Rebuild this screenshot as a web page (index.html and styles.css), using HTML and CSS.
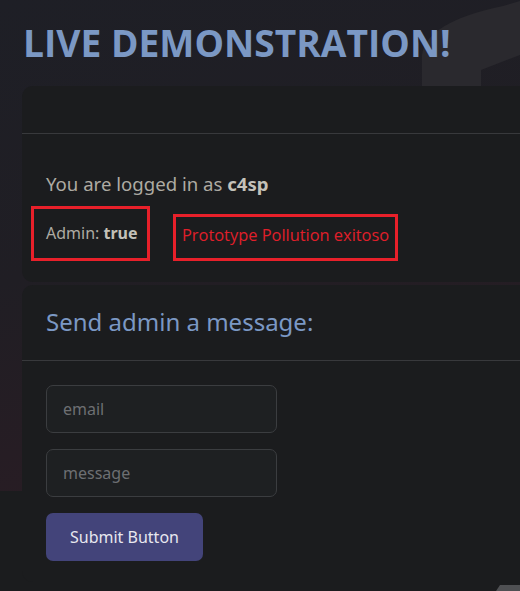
FILE: index.html
```html
<!DOCTYPE html>
<html lang="es">
<head>
<meta charset="utf-8">
<title>Live Demonstration</title>
<link rel="stylesheet" href="styles.css">
</head>
<body>
<div class="page">
  <div class="backdrop" aria-hidden="true">
    <svg class="deco" width="520" height="120" viewBox="0 0 520 120">
      <path d="M422,120 L422,55 Q426,22 503,6 L520,1 L520,55 L481,70 L481,120 Z" fill="#2a292e"/>
    </svg>
  </div>
  <main class="content">
    <h1 class="title">LIVE DEMONSTRATION!</h1>
    <section class="card">
      <div class="card-header"></div>
      <div class="card-body">
        <p class="logged">You are logged in as <b>c4sp</b></p>
        <div class="status-row">
          <div class="box admin">Admin: <b>true</b></div>
          <div class="box success">Prototype Pollution exitoso</div>
        </div>
      </div>
    </section>
    <section class="card">
      <div class="card-header tall">
        <h2 class="card-title">Send admin a message:</h2>
      </div>
      <form class="card-body form">
        <input class="field" type="text" placeholder="email">
        <input class="field" type="text" placeholder="message">
        <button class="btn" type="button">Submit Button</button>
      </form>
    </section>
  </main>
  <div class="corner-piece"></div>
</div>
</body>
</html>
```

FILE: styles.css
```css
html, body {
  margin: 0;
  padding: 0;
  background: #1b1c1e;
  font-family: "Noto Sans", "Open Sans", sans-serif;
}
.page {
  position: relative;
  min-height: 591px;
}
.backdrop {
  position: absolute;
  left: 0;
  top: 0;
  width: 100%;
  height: 491px;
  background: linear-gradient(165deg, #1e1f26 0%, #201e24 45%, #2c1c24 100%);
}
.deco {
  position: absolute;
  left: 0;
  top: 0;
}
.content {
  position: relative;
  padding: 0 0 0 22px;
  width: 520px;
  box-sizing: border-box;
}
.title {
  margin: 0;
  padding: 19px 0 0 1px;
  height: 86px;
  box-sizing: border-box;
  font-family: "Open Sans", "Noto Sans", sans-serif;
  font-weight: 700;
  font-size: 37.2px;
  line-height: 48px;
  color: #7b98c4;
  white-space: nowrap;
}
.card {
  background: #1b1c1e;
  border-radius: 11px 0 0 11px;
  margin-bottom: 3px;
}
.card-header {
  height: 47px;
  border-bottom: 1px solid #38393c;
  padding-left: 24px;
}
.card-header.tall {
  box-sizing: border-box;
  height: 76px;
  padding-top: 21px;
}
.card-body {
  padding: 24px 24px 21px 24px;
}
.logged {
  margin: 14px 0 0 0;
  font-size: 18.6px;
  line-height: 24px;
  color: #aeaba3;
}
.logged b { color: #c4c1b9; }
.status-row {
  display: flex;
  align-items: flex-end;
  margin-top: 10px;
  margin-left: -15px;
  gap: 23px;
}
.box {
  border: 3px solid #e8202a;
  box-sizing: border-box;
}
.admin {
  width: 119px;
  height: 55px;
  padding: 13px 0 0 12px;
  font-size: 16px;
  line-height: 22px;
  color: #aeaba3;
}
.admin b { color: #c4c1b9; }
.success {
  width: 225px;
  height: 47px;
  padding: 7px 0 0 6px;
  font-family: "Open Sans", sans-serif;
  font-size: 16.4px;
  line-height: 22px;
  color: #e01f2a;
  white-space: nowrap;
}
.card-title {
  margin: 0;
  font-weight: 400;
  font-size: 24px;
  line-height: 32px;
  color: #7b98c4;
}
.form {
  display: flex;
  flex-direction: column;
  align-items: flex-start;
  gap: 16px;
  padding-top: 24px;
}
.field {
  width: 231px;
  height: 48px;
  box-sizing: border-box;
  background: #1e2022;
  border: 1px solid #3b3d40;
  border-radius: 7px;
  padding: 0 16px;
  font-family: "Noto Sans", sans-serif;
  font-size: 16px;
  color: #c9c6be;
}
.field::placeholder { color: #6d6f72; }
.btn {
  width: 157px;
  height: 48px;
  background: #43447a;
  border: none;
  border-radius: 7px;
  color: #e8e8ef;
  font-family: "Noto Sans", sans-serif;
  font-size: 16px;
}
.corner-piece {
  position: absolute;
  left: 496px;
  top: 585px;
  width: 24px;
  height: 6px;
  background: #4f5053;
  clip-path: polygon(4px 0, 100% 0, 100% 100%, 0 100%);
}
```
